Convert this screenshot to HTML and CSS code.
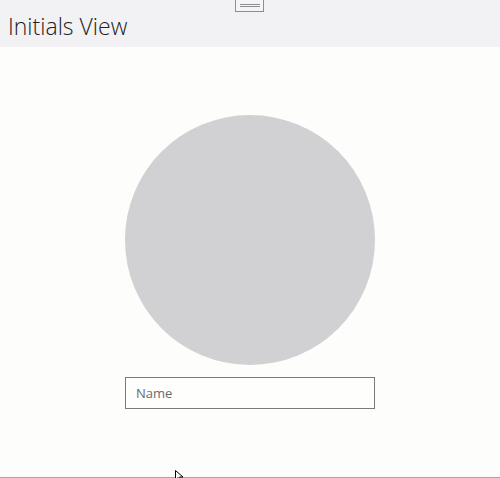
FILE: index.html
```html
<!DOCTYPE html>
<html>
<head>
<meta charset="utf-8">
<link rel="stylesheet" href="styles.css">
</head>
<body>
<div class="app">
  <header class="header">
    <div class="handle"><span></span><span></span></div>
    <h1 class="title">Initials View</h1>
  </header>
  <main class="content">
    <div class="avatar"></div>
    <input class="name" type="text" placeholder="Name">
  </main>
  <div class="footer-line"></div>
  <svg class="cursor" width="12" height="12" viewBox="0 0 12 12"><path d="M0.5 0.5 L0.5 10 L3 7.5 L5 11.5 L6.5 10.8 L4.6 7 L8 7 Z" fill="#fff" stroke="#000" stroke-width="1"/></svg>
</div>
</body>
</html>
```
FILE: styles.css
```css
html, body { margin: 0; padding: 0; }
body {
  width: 500px;
  height: 478px;
  background: #fdfdfc;
  font-family: "Open Sans", "Noto Sans", sans-serif;
  overflow: hidden;
}
.app {
  position: relative;
  height: 478px;
  display: flex;
  flex-direction: column;
}
.header {
  position: relative;
  height: 47px;
  background: #f2f2f4;
  display: flex;
  align-items: flex-start;
}
.title {
  margin: 15px 0 0 8px;
  font-family: "Open Sans", sans-serif;
  font-weight: 300;
  font-size: 23px;
  color: #222;
  line-height: 1;
}
.handle {
  position: absolute;
  left: 235px;
  top: -1px;
  width: 27px;
  height: 11px;
  border: 1px solid #8e8e8e;
  background: #f4f4f6;
  display: flex;
  flex-direction: column;
  align-items: center;
  justify-content: center;
  gap: 1px;
  box-sizing: content-box;
}
.handle span {
  display: block;
  width: 20px;
  height: 1px;
  background: #8e8e8e;
}
.content {
  flex: 1;
  display: flex;
  flex-direction: column;
  align-items: center;
  padding-top: 68px;
}
.avatar {
  width: 250px;
  height: 250px;
  border-radius: 50%;
  background: #d1d1d3;
}
.name {
  margin-top: 12px;
  width: 250px;
  height: 32px;
  box-sizing: border-box;
  border: 1px solid #7a7a7a;
  background: #fefefd;
  padding: 0 10px;
  font-family: "Open Sans", sans-serif;
  font-size: 13px;
  color: #333;
  outline: none;
}
.name::placeholder { color: #6a6a6a; }
.footer-line {
  height: 1px;
  background: #a8a8a8;
  flex: none;
}
.cursor {
  position: absolute;
  left: 175px;
  top: 470px;
}
```
